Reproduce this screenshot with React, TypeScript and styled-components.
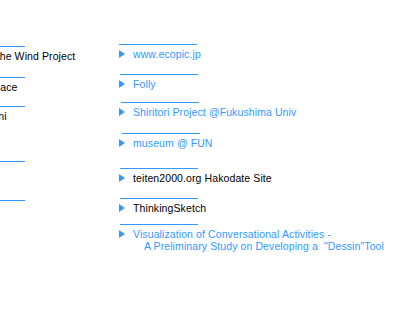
import React from "react";
import styled, { createGlobalStyle } from "styled-components";

const GlobalStyle = createGlobalStyle`
  html, body {
    margin: 0;
    padding: 0;
    background: #ffffff;
    overflow: hidden;
  }
  body {
    font-family: "Liberation Sans", Arial, sans-serif;
  }
`;

const Page = styled.div`
  display: flex;
  align-items: flex-start;
  padding-top: 44px;
  margin-left: -53px;
`;

const Column = styled.ul<{ $width: number; $top?: number }>`
  list-style: none;
  margin: 0;
  padding: 0;
  padding-top: ${(p) => p.$top ?? 0}px;
  width: ${(p) => p.$width}px;
  flex-shrink: 0;
`;

const Item = styled.li<{ $h?: number }>`
  display: flex;
  flex-direction: column;
  height: ${(p) => (p.$h ? `${p.$h}px` : "auto")};
`;

const Rule = styled.div<{ $shift?: number }>`
  width: 78px;
  height: 1px;
  margin-left: ${(p) => p.$shift ?? 0}px;
  background: #3399ff;
`;

const Row = styled.div`
  display: flex;
  align-items: flex-start;
  padding-top: 3px;
`;

const Arrow = styled.span`
  flex-shrink: 0;
  width: 0;
  height: 0;
  margin-top: 2px;
  margin-right: 8px;
  border-left: 6px solid #3399ff;
  border-top: 4.5px solid transparent;
  border-bottom: 4.5px solid transparent;
`;

const Label = styled.a<{ $tone?: "link" | "plain" }>`
  font-size: 10.5px;
  line-height: 12px;
  letter-spacing: 0.1px;
  white-space: nowrap;
  text-decoration: none;
  color: ${(p) => (p.$tone === "plain" ? "#000000" : "#3399ff")};
`;

const Sub = styled.span`
  display: block;
  padding-left: 11px;
`;

type Entry = { text: string; tone: "link" | "plain"; h?: number; shift?: number };

const leftEntries: Entry[] = [
  { text: "Across the Wind Project", tone: "plain", h: 31 },
  { text: "Mind Space", tone: "plain", h: 29 },
  { text: "Kurumani", tone: "plain", h: 55 },
  { text: "", tone: "plain", h: 39 },
  { text: "", tone: "plain", h: 30 },
];

const rightEntries: Entry[] = [
  { text: "www.ecopic.jp", tone: "link", h: 30 },
  { text: "Folly", tone: "link", h: 28, shift: 1 },
  { text: "Shiritori Project @Fukushima Univ", tone: "link", h: 31, shift: 2 },
  { text: "museum @ FUN", tone: "link", h: 35, shift: 3 },
  { text: "teiten2000.org Hakodate Site", tone: "plain", h: 30, shift: 1 },
  { text: "ThinkingSketch", tone: "plain", h: 26, shift: 1 },
];

const App = () => {
  return (
    <>
      <GlobalStyle />
      <Page>
        <Column $width={172} $top={2}>
          {leftEntries.map((e, i) => (
            <Item key={i} $h={e.h}>
              <Rule />
              {e.text ? (
                <Row>
                  <Arrow />
                  <Label $tone={e.tone} href="#">
                    {e.text}
                  </Label>
                </Row>
              ) : null}
            </Item>
          ))}
        </Column>
        <Column $width={280}>
          {rightEntries.map((e, i) => (
            <Item key={i} $h={e.h}>
              <Rule $shift={e.shift} />
              <Row>
                <Arrow />
                <Label $tone={e.tone} href="#">
                  {e.text}
                </Label>
              </Row>
            </Item>
          ))}
          <Item>
            <Rule $shift={1} />
            <Row>
              <Arrow />
              <Label $tone="link" href="#">
                Visualization of Conversational Activities -
                <Sub>A Preliminary Study on Developing a &nbsp;&quot;Dessin&quot;Tool</Sub>
              </Label>
            </Row>
          </Item>
        </Column>
      </Page>
    </>
  );
};

export default App;
